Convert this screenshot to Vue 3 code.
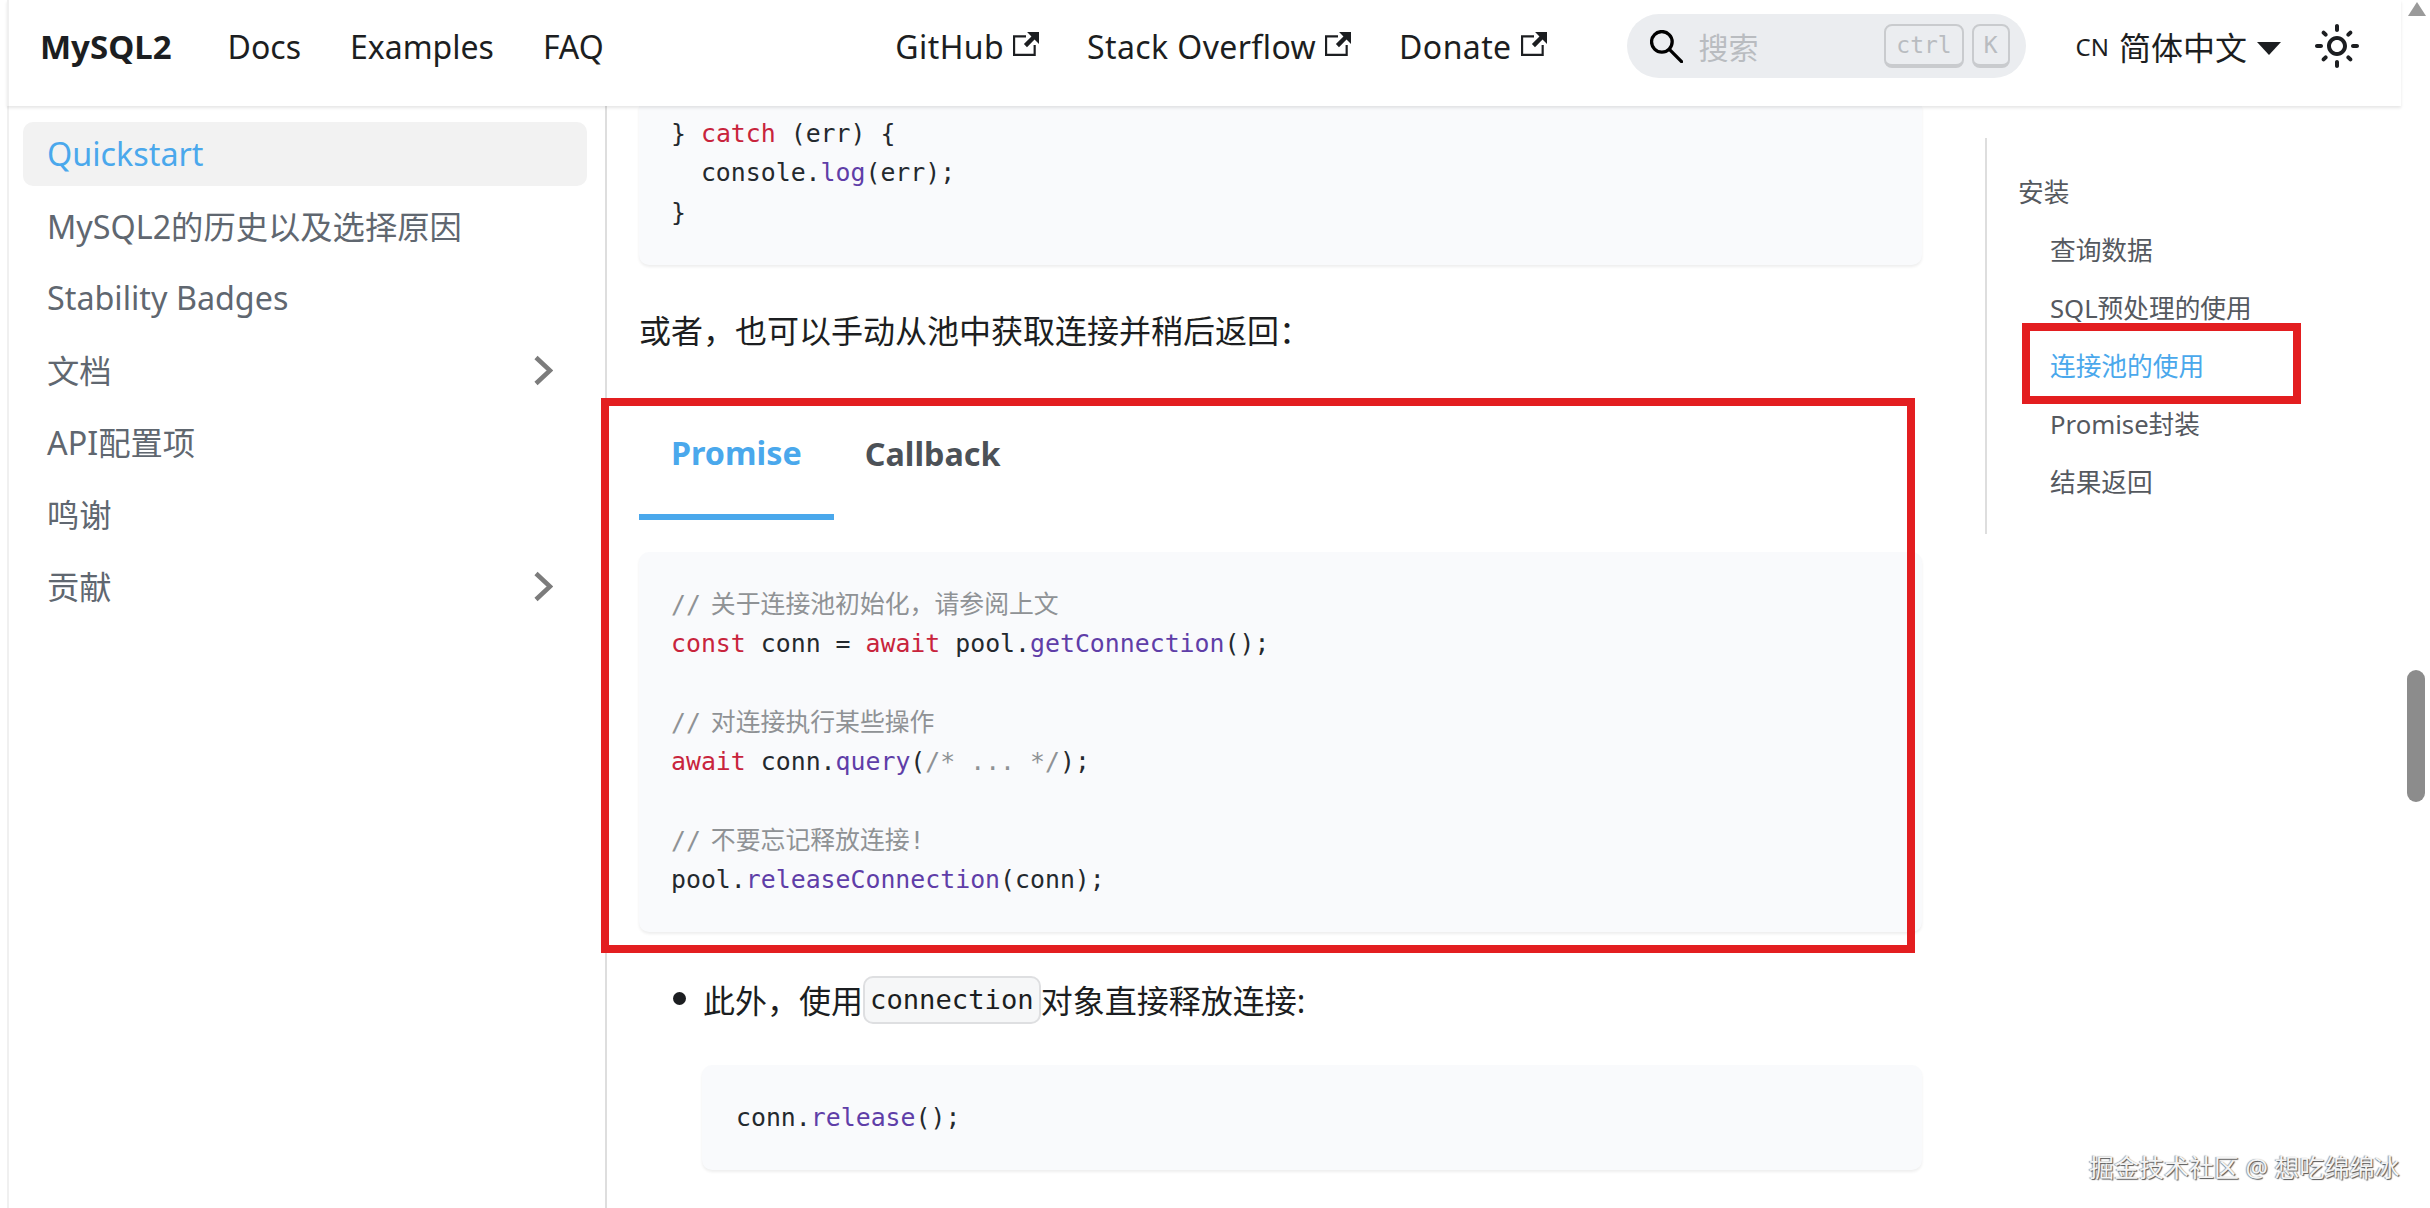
<script setup>
const leftLinks = ['Docs', 'Examples', 'FAQ']
const extLinks = ['GitHub', 'Stack Overflow', 'Donate']
const sideItems = [
  { t: 'Quickstart', active: true },
  { t: 'MySQL2的历史以及选择原因' },
  { t: 'Stability Badges' },
  { t: '文档', more: true },
  { t: 'API配置项' },
  { t: '鸣谢' },
  { t: '贡献', more: true }
]
const toc = [
  { t: '安装' },
  { t: '查询数据', sub: true },
  { t: 'SQL预处理的使用', sub: true },
  { t: '连接池的使用', sub: true, active: true },
  { t: 'Promise封装', sub: true },
  { t: '结果返回', sub: true }
]
const topCode = [
  [['} '], ['catch', 'kw'], [' (err) {']],
  [['  console.'], ['log', 'fn'], ['(err);']],
  [['}']]
]
const mainCode = [
  [['// 关于连接池初始化，请参阅上文', 'cm']],
  [['const', 'kw'], [' conn = '], ['await', 'kw'], [' pool.'], ['getConnection', 'fn'], ['();']],
  [[' ']],
  [['// 对连接执行某些操作', 'cm']],
  [['await', 'kw'], [' conn.'], ['query', 'fn'], ['('], ['/* ... */', 'cb'], [');']],
  [[' ']],
  [['// 不要忘记释放连接!', 'cm']],
  [['pool.'], ['releaseConnection', 'fn'], ['(conn);']]
]
const relCode = [[['conn.'], ['release', 'fn'], ['();']]]
const extPath = 'M21 13v10h-21v-19h12v2h-10v15h17v-8h2zm3-12h-10.988l4.035 4-6.977 7.07 2.828 2.828 6.977-7.07 4.125 4.172v-11z'
const sunPath = 'M12,9c1.65,0,3,1.35,3,3s-1.35,3-3,3s-3-1.35-3-3S10.35,9,12,9 M12,7c-2.76,0-5,2.24-5,5s2.24,5,5,5s5-2.24,5-5 S14.76,7,12,7L12,7z M2,13l2,0c0.55,0,1-0.45,1-1s-0.45-1-1-1l-2,0c-0.55,0-1,0.45-1,1S1.45,13,2,13z M20,13l2,0c0.55,0,1-0.45,1-1 s-0.45-1-1-1l-2,0c-0.55,0-1,0.45-1,1S19.45,13,20,13z M11,2v2c0,0.55,0.45,1,1,1s1-0.45,1-1V2c0-0.55-0.45-1-1-1S11,1.45,11,2z M11,20v2c0,0.55,0.45,1,1,1s1-0.45,1-1v-2c0-0.55-0.45-1-1-1C11.45,19,11,19.45,11,20z M5.99,4.58c-0.39-0.39-1.03-0.39-1.41,0 c-0.39,0.39-0.39,1.03,0,1.41l1.06,1.06c0.39,0.39,1.03,0.39,1.41,0s0.39-1.03,0-1.41L5.99,4.58z M18.36,16.95 c-0.39-0.39-1.03-0.39-1.41,0c-0.39,0.39-0.39,1.03,0,1.41l1.06,1.06c0.39,0.39,1.03,0.39,1.41,0c0.39-0.39,0.39-1.03,0-1.41 L18.36,16.95z M19.42,5.99c0.39-0.39,0.39-1.03,0-1.41c-0.39-0.39-1.03-0.39-1.41,0l-1.06,1.06c-0.39,0.39-0.39,1.03,0,1.41 s1.03,0.39,1.41,0L19.42,5.99z M7.05,18.36c0.39-0.39,0.39-1.03,0-1.41c-0.39-0.39-1.03-0.39-1.41,0l-1.06,1.06 c-0.39,0.39-0.39,1.03,0,1.41s1.03,0.39,1.41,0L7.05,18.36z'
</script>

<template>
  <div class="page">
    <header class="nav">
      <div class="nav-left">
        <span class="brand">MySQL2</span>
        <a v-for="l in leftLinks" :key="l" class="link">{{ l }}</a>
      </div>
      <div class="nav-right">
        <div class="ext-links">
          <a v-for="l in extLinks" :key="l" class="link ext">
            {{ l }}
            <svg class="ext-icon" viewBox="0 0 24 24"><path :d="extPath" fill="currentColor" /></svg>
          </a>
        </div>
        <div class="search">
          <svg class="search-icon" viewBox="0 0 32 32">
            <circle cx="11.5" cy="11.5" r="10" stroke="currentColor" stroke-width="3.2" fill="none" />
            <path d="M18.8 18.8 L30.6 30.6" stroke="currentColor" stroke-width="3.2" stroke-linecap="round" fill="none" />
          </svg>
          <span class="placeholder">搜索</span>
          <span class="keys">
            <kbd class="key">ctrl</kbd>
            <kbd class="key">K</kbd>
          </span>
        </div>
        <div class="lang">
          <span class="cn">CN</span>
          <span>简体中文</span>
          <i class="caret"></i>
        </div>
        <svg class="sun" viewBox="0 0 24 24"><path :d="sunPath" fill="currentColor" /></svg>
      </div>
    </header>

    <div class="body">
      <aside class="side">
        <div v-for="s in sideItems" :key="s.t" class="side-item" :class="{ on: s.active }">
          <span class="side-text">{{ s.t }}</span>
          <svg v-if="s.more" class="chev" viewBox="0 0 19 31">
            <path d="M2 2.5 L16 15.5 L2 28.5" stroke="currentColor" stroke-width="4.6" fill="none" />
          </svg>
        </div>
      </aside>

      <main class="main">
        <div class="block block-top">
          <div v-for="(line, i) in topCode" :key="i" class="code-line">
            <span v-for="(tok, j) in line" :key="j" :class="tok[1]">{{ tok[0] }}</span>
          </div>
        </div>

        <p class="para">或者，也可以手动从池中获取连接并稍后返回：</p>

        <div class="tabs">
          <div class="tab on">Promise</div>
          <div class="tab">Callback</div>
        </div>

        <div class="block block-main">
          <div v-for="(line, i) in mainCode" :key="i" class="code-line">
            <span v-for="(tok, j) in line" :key="j" :class="tok[1]">{{ tok[0] }}</span>
          </div>
        </div>

        <div class="bullet">
          <i class="dot"></i>
          <span class="bullet-text">此外，使用</span>
          <code class="pill">connection</code>
          <span class="bullet-text">对象直接释放连接:</span>
        </div>

        <div class="block block-rel">
          <div v-for="(line, i) in relCode" :key="i" class="code-line">
            <span v-for="(tok, j) in line" :key="j" :class="tok[1]">{{ tok[0] }}</span>
          </div>
        </div>
      </main>

      <nav class="toc">
        <div v-for="t in toc" :key="t.t" class="toc-item" :class="{ sub: t.sub, on: t.active }">{{ t.t }}</div>
      </nav>
    </div>

    <div class="mark mark-big"></div>
    <div class="mark mark-small"></div>
    <div class="scroll-arrow"></div>
    <div class="scroll-thumb"></div>
    <div class="watermark">掘金技术社区 @ 想吃绵绵冰</div>
  </div>
</template>

<style>
html, body { margin: 0; padding: 0; background: #fff; overflow: hidden; }
</style>

<style scoped>
.page {
  position: relative;
  width: 2430px;
  height: 1208px;
  overflow: hidden;
  background: #fff;
  color: #1c1e21;
  font-family: "Noto Sans", "Noto Sans CJK SC", sans-serif;
  font-size: 32px;
}
.nav {
  position: relative;
  z-index: 2;
  box-sizing: border-box;
  height: 106px;
  margin-left: 7px;
  width: 2394px;
  padding: 0 40px 14px 31px;
  display: flex;
  align-items: center;
  justify-content: space-between;
  background: #fff;
  border-left: 2px solid #f0f0f0;
  box-shadow: 0 2px 3px rgba(0, 0, 0, 0.1);
}
.nav-left, .nav-right, .ext-links, .ext, .lang, .search, .keys { display: flex; align-items: center; }
.nav-left { gap: 49px; }
.brand { font-weight: 700; margin-right: 7px; font-size: 33px; }
.nav-right { gap: 0; }
.ext-links { gap: 48px; margin-right: 80px; letter-spacing: 0.4px; }
.ext { gap: 9px; }
.ext-icon { width: 26px; height: 26px; margin-top: -4px; }
.search {
  box-sizing: border-box;
  width: 399px;
  height: 64px;
  border-radius: 32px;
  background: #ebedf0;
  padding: 0 16px 0 23px;
  margin-right: 50px;
  color: #1c1e21;
}
.search-icon { width: 33px; height: 33px; color: #000; }
.placeholder { margin-left: 16px; font-size: 30px; color: #b9bcc0; }
.keys { margin-left: auto; gap: 8px; }
.key {
  box-sizing: border-box;
  height: 44px;
  padding: 0 10px;
  border: 2px solid #c9cbce;
  border-bottom-width: 4px;
  border-radius: 8px;
  background: #ebedf0;
  font-family: "DejaVu Sans Mono", monospace;
  font-size: 23px;
  line-height: 38px;
  color: #b9bcc0;
}
.lang { gap: 10px; margin-right: 32px; }
.cn { font-size: 24px; }
.caret {
  width: 0;
  height: 0;
  border-left: 12px solid transparent;
  border-right: 12px solid transparent;
  border-top: 13px solid #1c1e21;
  margin-top: 4px;
}
.sun { width: 48px; height: 48px; }

.body {
  display: flex;
  align-items: flex-start;
  margin-left: 7px;
  height: 1102px;
  border-left: 2px solid #f0f0f0;
}
.side {
  box-sizing: border-box;
  flex: none;
  width: 598px;
  height: 1102px;
  padding: 16px 18px 0 14px;
  border-right: 2px solid #dedede;
  display: flex;
  flex-direction: column;
  gap: 8px;
  color: #606770;
  font-size: 32.3px;
}
.side-item {
  display: flex;
  align-items: center;
  justify-content: space-between;
  height: 64px;
  padding: 0 34px 0 24px;
  border-radius: 10px;
}
.side-text { margin-bottom: 3px; }
.side-item.on { background: #f2f2f2; color: #4aa8ec; }
.chev { width: 19px; height: 31px; color: #7c7c7c; }

.main {
  flex: none;
  box-sizing: border-box;
  width: 1315px;
  padding-left: 32px;
  color: #1c1e21;
}
.block {
  background: #f9fafc;
  border-radius: 10px;
  box-shadow: 0 2px 3px rgba(0, 0, 0, 0.07);
  font-family: "DejaVu Sans Mono", "Noto Sans CJK SC", monospace;
  font-size: 24.85px;
  color: #24292e;
}
.code-line { height: 39.4px; line-height: 39.4px; white-space: pre; }
.kw { color: #c8243c; }
.fn { color: #5f3ea8; }
.cm { color: #8f9295; word-spacing: -5px; }
.cb { color: #8f9295; }
.block-top {
  box-sizing: border-box;
  height: 159px;
  padding: 8px 32px 0;
  border-radius: 0 0 10px 10px;
}
.para { margin: 41px 0 0; line-height: 50px; font-size: 32px; }
.tabs { display: flex; margin-top: 34px; font-size: 32.3px; font-weight: 700; color: #4c5157; }
.tab {
  box-sizing: border-box;
  height: 130px;
  padding: 0 32px 4px;
  display: flex;
  align-items: center;
}
.tab.on { color: #4aa8ec; border-bottom: 6px solid #4aa8ec; padding-bottom: 0; margin-right: -1px; }
.block-main { box-sizing: border-box; height: 380px; margin-top: 32px; padding: 32.5px 32px 0; }
.bullet {
  display: flex;
  align-items: center;
  height: 50px;
  margin: 43px 0 0 64px;
  font-size: 32px;
  position: relative;
}
.bullet-text { margin-bottom: 2px; }
.dot {
  position: absolute;
  left: -30px;
  top: 17px;
  width: 13px;
  height: 13px;
  border-radius: 50%;
  background: #1c1e21;
}
.pill {
  box-sizing: border-box;
  height: 48px;
  margin: 0;
  padding: 0 5px;
  border: 2px solid #dedfe1;
  border-radius: 10px;
  background: #f6f7f8;
  font-family: "DejaVu Sans Mono", monospace;
  font-size: 27.2px;
  line-height: 44px;
}
.block-rel {
  box-sizing: border-box;
  height: 105px;
  margin: 40px 0 0 63px;
  padding: 33px 34px 0;
}

.toc {
  box-sizing: border-box;
  flex: none;
  width: 300px;
  margin: 32px 0 0 63px;
  padding: 26px 0 22px;
  border-left: 2px solid #dedede;
  color: #55595f;
  font-size: 25.7px;
}
.toc-item { height: 58px; line-height: 58px; padding-left: 31px; }
.toc-item.sub { padding-left: 63px; }
.toc-item.on { color: #4aa8ec; }

.mark {
  position: absolute;
  z-index: 3;
  box-sizing: border-box;
  border: 8px solid #e31e20;
}
.mark-big { left: 601px; top: 398px; width: 1314px; height: 555px; }
.mark-small { left: 2022px; top: 323px; width: 279px; height: 81px; }
.scroll-arrow {
  position: absolute;
  z-index: 3;
  left: 2408px;
  top: 2px;
  width: 0;
  height: 0;
  border-left: 9px solid transparent;
  border-right: 9px solid transparent;
  border-bottom: 14px solid #9a9a9a;
}
.scroll-thumb {
  position: absolute;
  z-index: 3;
  left: 2407px;
  top: 670px;
  width: 18px;
  height: 132px;
  border-radius: 9px;
  background: #8c8c8c;
}
.watermark {
  position: absolute;
  z-index: 3;
  left: 2089px;
  top: 1150px;
  font-size: 25px;
  line-height: 34px;
  white-space: nowrap;
  color: #f4f4f4;
  text-shadow: 1px 1px 1px #555, -1px 0 1px #999;
}
</style>
